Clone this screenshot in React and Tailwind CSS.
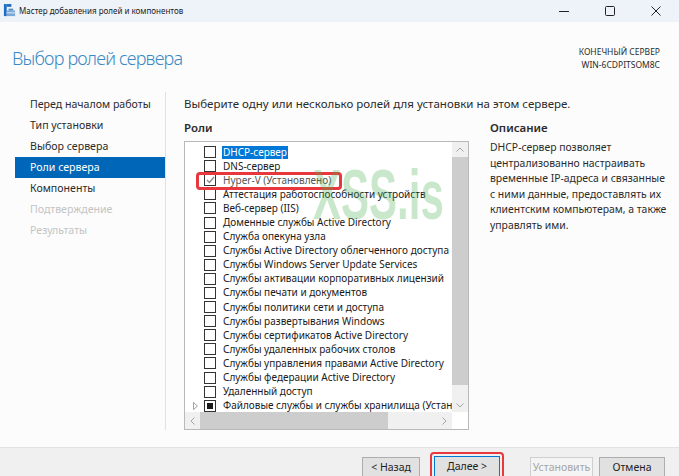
import React from 'react';

const roles = [
  { name: 'DHCP-сервер', selected: true },
  { name: 'DNS-сервер' },
  { name: 'Hyper-V (Установлено)', installed: true },
  { name: 'Аттестация работоспособности устройств' },
  { name: 'Веб-сервер (IIS)' },
  { name: 'Доменные службы Active Directory' },
  { name: 'Служба опекуна узла' },
  { name: 'Службы Active Directory облегченного доступа к каталогам' },
  { name: 'Службы Windows Server Update Services' },
  { name: 'Службы активации корпоративных лицензий' },
  { name: 'Службы печати и документов' },
  { name: 'Службы политики сети и доступа' },
  { name: 'Службы развертывания Windows' },
  { name: 'Службы сертификатов Active Directory' },
  { name: 'Службы удаленных рабочих столов' },
  { name: 'Службы управления правами Active Directory' },
  { name: 'Службы федерации Active Directory' },
  { name: 'Удаленный доступ' },
  { name: 'Файловые службы и службы хранилища (Установлено 2 из 12)', partial: true, expand: true },
];

const steps = [
  { label: 'Перед началом работы' },
  { label: 'Тип установки' },
  { label: 'Выбор сервера' },
  { label: 'Роли сервера', active: true },
  { label: 'Компоненты' },
  { label: 'Подтверждение', disabled: true },
  { label: 'Результаты', disabled: true },
];

const WizardIcon = () => (
  <svg width="13" height="14" viewBox="0 0 14 15">
    <rect x="1" y="0" width="3" height="13" fill="#1b6ec2" />
    <rect x="4" y="0" width="5" height="3" fill="#1b6ec2" />
    <rect x="4" y="7" width="9" height="6" fill="#7aa7d6" />
    <rect x="6" y="5" width="5" height="2" fill="#4f88c6" />
    <rect x="4" y="9" width="9" height="1" fill="#e8f0fa" />
  </svg>
);

const RoleRow = ({ role }) => (
  <div className="flex items-center h-[14.1px] whitespace-nowrap">
    <div className="w-[19px] shrink-0 flex items-center justify-start pl-[8px]">
      {role.expand && (
        <svg width="5" height="8" viewBox="0 0 5 8">
          <path d="M0.5 0.5 L4.5 4 L0.5 7.5 Z" fill="none" stroke="#a0a0a0" strokeWidth="1" />
        </svg>
      )}
    </div>
    <div className="w-[12px] h-[12px] shrink-0 border border-[#333] bg-white flex items-center justify-center">
      {role.partial && <div className="w-[6px] h-[6px] bg-[#1a1a1a]" />}
      {role.installed && (
        <svg width="9" height="8" viewBox="0 0 9 8">
          <path d="M1 4 L3.5 6.5 L8 1" fill="none" stroke="#8a8a8a" strokeWidth="1.4" />
        </svg>
      )}
    </div>
    <span
      className={
        'shrink-0 ml-[6px] px-[1px] leading-[13px] ' +
        (role.selected ? 'bg-[#0078d7] text-white' : role.installed ? 'text-[#555]' : 'text-[#1a1a1a]')
      }
    >
      {role.name}
    </span>
  </div>
);

const App = () => {
  return (
    <div className="w-[679px] h-[476px] overflow-hidden relative bg-[#fcfcfc] font-['Segoe_UI','Noto_Sans',sans-serif] text-[#1e1e1e]">
      {/* title bar */}
      <div className="h-[22px] bg-[#eef2f9] flex items-center">
        <div className="pl-[3px] pr-[3px] flex items-center">
          <WizardIcon />
        </div>
        <span className="text-[8px] text-[#1a1a1a]">Мастер добавления ролей и компонентов</span>
        <div className="ml-auto flex items-center h-full">
          <div className="w-[46px] h-full flex items-center justify-center">
            <svg width="10" height="10" viewBox="0 0 10 10"><path d="M0 5.5 H10" stroke="#222" strokeWidth="1" /></svg>
          </div>
          <div className="w-[46px] h-full flex items-center justify-center">
            <svg width="10" height="10" viewBox="0 0 10 10"><rect x="0.5" y="0.5" width="9" height="9" rx="1" fill="none" stroke="#222" strokeWidth="1" /></svg>
          </div>
          <div className="w-[46px] h-full flex items-center justify-center">
            <svg width="10" height="10" viewBox="0 0 10 10"><path d="M0.5 0.5 L9.5 9.5 M9.5 0.5 L0.5 9.5" stroke="#222" strokeWidth="1" /></svg>
          </div>
        </div>
      </div>

      {/* header */}
      <div className="h-[70px] flex items-start justify-between">
        <h1 className="pl-[12px] pt-[24px] text-[18px] leading-[24px] font-light tracking-[-0.8px] text-[#3a89c6]">
          Выбор ролей сервера
        </h1>
        <div className="pr-[19px] pt-[23px] text-right text-[8.5px] leading-[13px] text-[#2a2a2a]">
          <div>КОНЕЧНЫЙ СЕРВЕР</div>
          <div>WIN-6CDPITSOM8C</div>
        </div>
      </div>

      {/* body */}
      <div className="flex h-[355px]">
        <nav className="w-[166px] pl-[15px] pt-[2px] border-r border-[#e1e1e1] h-[338px]">
          {steps.map((s) => (
            <div
              key={s.label}
              className={
                'h-[21px] flex items-center pl-[15px] text-[10.6px] ' +
                (s.active ? 'bg-[#0067b8] text-white' : s.disabled ? 'text-[#c4c4c4]' : 'text-[#2b2b2b]')
              }
            >
              {s.label}
            </div>
          ))}
        </nav>

        <div className="pl-[18px] pt-[4px] flex-1 text-[11.5px]">
          <div className="h-[16px] leading-[16px] text-[#2b2b2b]">
            Выберите одну или несколько ролей для установки на этом сервере.
          </div>
          <div className="flex mt-[8px]">
            <div className="w-[285px]">
              <div className="font-semibold h-[16px] leading-[16px] text-[#2b2b2b]">Роли</div>
              <div className="mt-[5px] h-[289px] border border-[#b9b9b9] bg-white relative overflow-hidden text-[10px]">
                <div className="absolute left-0 top-[3px] w-[268px] overflow-hidden">
                  {roles.map((r) => (
                    <RoleRow key={r.name} role={r} />
                  ))}
                </div>
                {/* vertical scrollbar */}
                <div className="absolute right-0 top-0 w-[16px] h-[270px] bg-[#f0f0f0] flex flex-col">
                  <div className="h-[15px] flex items-center justify-center">
                    <svg width="8" height="5" viewBox="0 0 8 5"><path d="M0.5 4.5 L4 1 L7.5 4.5" fill="none" stroke="#a5a5a5" strokeWidth="1" /></svg>
                  </div>
                  <div className="h-[228px] bg-[#cdcdcd]" />
                  <div className="flex-1 flex items-end justify-center pb-[4px]">
                    <svg width="8" height="5" viewBox="0 0 8 5"><path d="M0.5 0.5 L4 4 L7.5 0.5" fill="none" stroke="#a5a5a5" strokeWidth="1" /></svg>
                  </div>
                </div>
                {/* horizontal scrollbar */}
                <div className="absolute left-0 bottom-0 w-[268px] h-[17px] bg-[#f0f0f0] flex items-center">
                  <div className="w-[15px] flex items-center justify-center">
                    <svg width="5" height="8" viewBox="0 0 5 8"><path d="M4.5 0.5 L1 4 L4.5 7.5" fill="none" stroke="#a5a5a5" strokeWidth="1" /></svg>
                  </div>
                  <div className="w-[188px] h-full bg-[#cdcdcd]" />
                  <div className="flex-1 flex items-center justify-end pr-[6px]">
                    <svg width="5" height="8" viewBox="0 0 5 8"><path d="M0.5 0.5 L4 4 L0.5 7.5" fill="none" stroke="#a5a5a5" strokeWidth="1" /></svg>
                  </div>
                </div>
                <div className="absolute right-0 bottom-0 w-[16px] h-[17px] bg-white" />
                {/* highlight frame */}
                <div className="absolute left-[11px] top-[30px] w-[146px] h-[18px] border-[3px] border-[#e8383d] rounded-[4px]" />
              </div>
            </div>
            <div className="ml-[21px] w-[185px]">
              <div className="font-semibold h-[16px] leading-[16px] text-[#2b2b2b]">Описание</div>
              <div className="mt-[4px] text-[10.4px] leading-[15.6px] text-[#2b2b2b] whitespace-nowrap">
                DHCP-сервер позволяет<br />
                централизованно настраивать<br />
                временные IP-адреса и связанные<br />
                с ними данные, предоставлять их<br />
                клиентским компьютерам, а также<br />
                управлять ими.
              </div>
            </div>
          </div>
        </div>
      </div>

      {/* watermark */}
      <div className="absolute left-[313px] top-[160px] origin-left scale-x-[0.6] text-[70px] leading-none font-bold text-[#4caf50]/30 pointer-events-none font-['Liberation_Sans',sans-serif] whitespace-nowrap">
        XSS.is
      </div>

      {/* footer */}
      <div className="absolute left-0 bottom-0 w-full h-[29px] bg-[#f0f0f0] border-t border-[#e3e3e3] flex items-start pt-[9px] text-[10.5px]">
        <div className="ml-[362px] w-[58px] h-[22px] bg-[#e1e1e1] border border-[#adadad] flex items-center justify-center">
          &lt; Назад
        </div>
        <div className="ml-[10px] -mt-[5px] p-[2px] border-[2px] border-[#e8383d] rounded-[4px]">
          <div className="w-[66px] h-[22px] bg-[#e1e1e1] border border-[#0078d7] flex items-center justify-center">
            Далее &gt;
          </div>
        </div>
        <div className="ml-[26px] w-[63px] h-[22px] bg-[#f4f4f4] border border-[#cfcfcf] text-[#a6a6a6] flex items-center justify-center">
          Установить
        </div>
        <div className="ml-[6px] w-[66px] h-[22px] bg-[#e1e1e1] border border-[#adadad] flex items-center justify-center">
          Отмена
        </div>
      </div>
    </div>
  );
};

export default App;
